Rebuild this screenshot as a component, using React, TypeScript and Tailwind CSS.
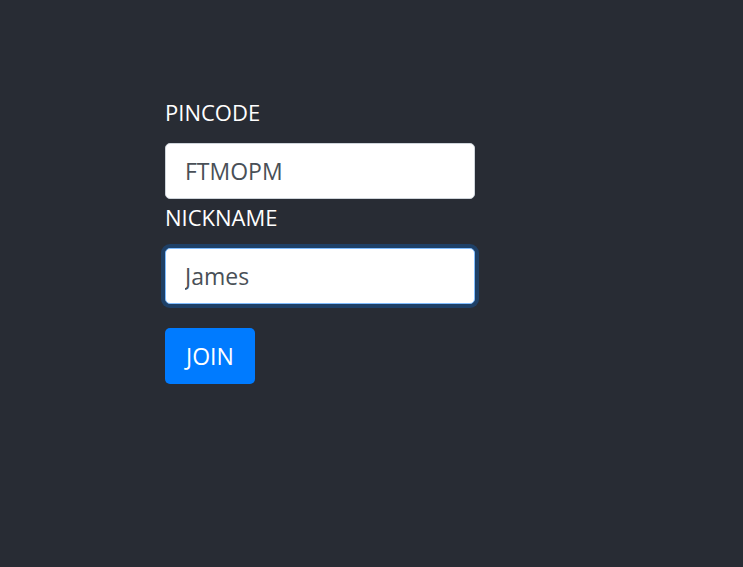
import { useState } from 'react';

export default function App() {
  const [pincode, setPincode] = useState('FTMOPM');
  const [nickname, setNickname] = useState('James');

  return (
    <div
      className="min-h-screen w-full bg-[#282c34] pt-[96px] pl-[165px]"
      style={{ fontFamily: '"Open Sans", "Noto Sans", sans-serif' }}
    >
      <form className="w-[310px]" onSubmit={(e) => e.preventDefault()}>
        <label className="block text-[22px] leading-[33px] text-white">PINCODE</label>
        <input
          className="mt-[14px] block h-[56px] w-full rounded-[5px] border border-[#ced4da] bg-white px-[19px] text-[23px] text-[#495057] outline-none"
          value={pincode}
          onChange={(e) => setPincode(e.target.value)}
        />
        <label className="mt-[2px] block text-[22px] leading-[33px] text-white">NICKNAME</label>
        <input
          autoFocus
          className="mt-[14px] block h-[56px] w-full rounded-[5px] border border-[#80bdff] bg-white px-[19px] text-[23px] text-[#495057] caret-[#495057] shadow-[0_0_0_4px_rgba(0,123,255,0.25)] outline-none"
          value={nickname}
          onChange={(e) => setNickname(e.target.value)}
        />
        <button
          type="submit"
          className="mt-6 block h-[56px] rounded-[5px] bg-[#007bff] px-[21px] text-[23px] text-white"
        >
          JOIN
        </button>
      </form>
    </div>
  );
}
